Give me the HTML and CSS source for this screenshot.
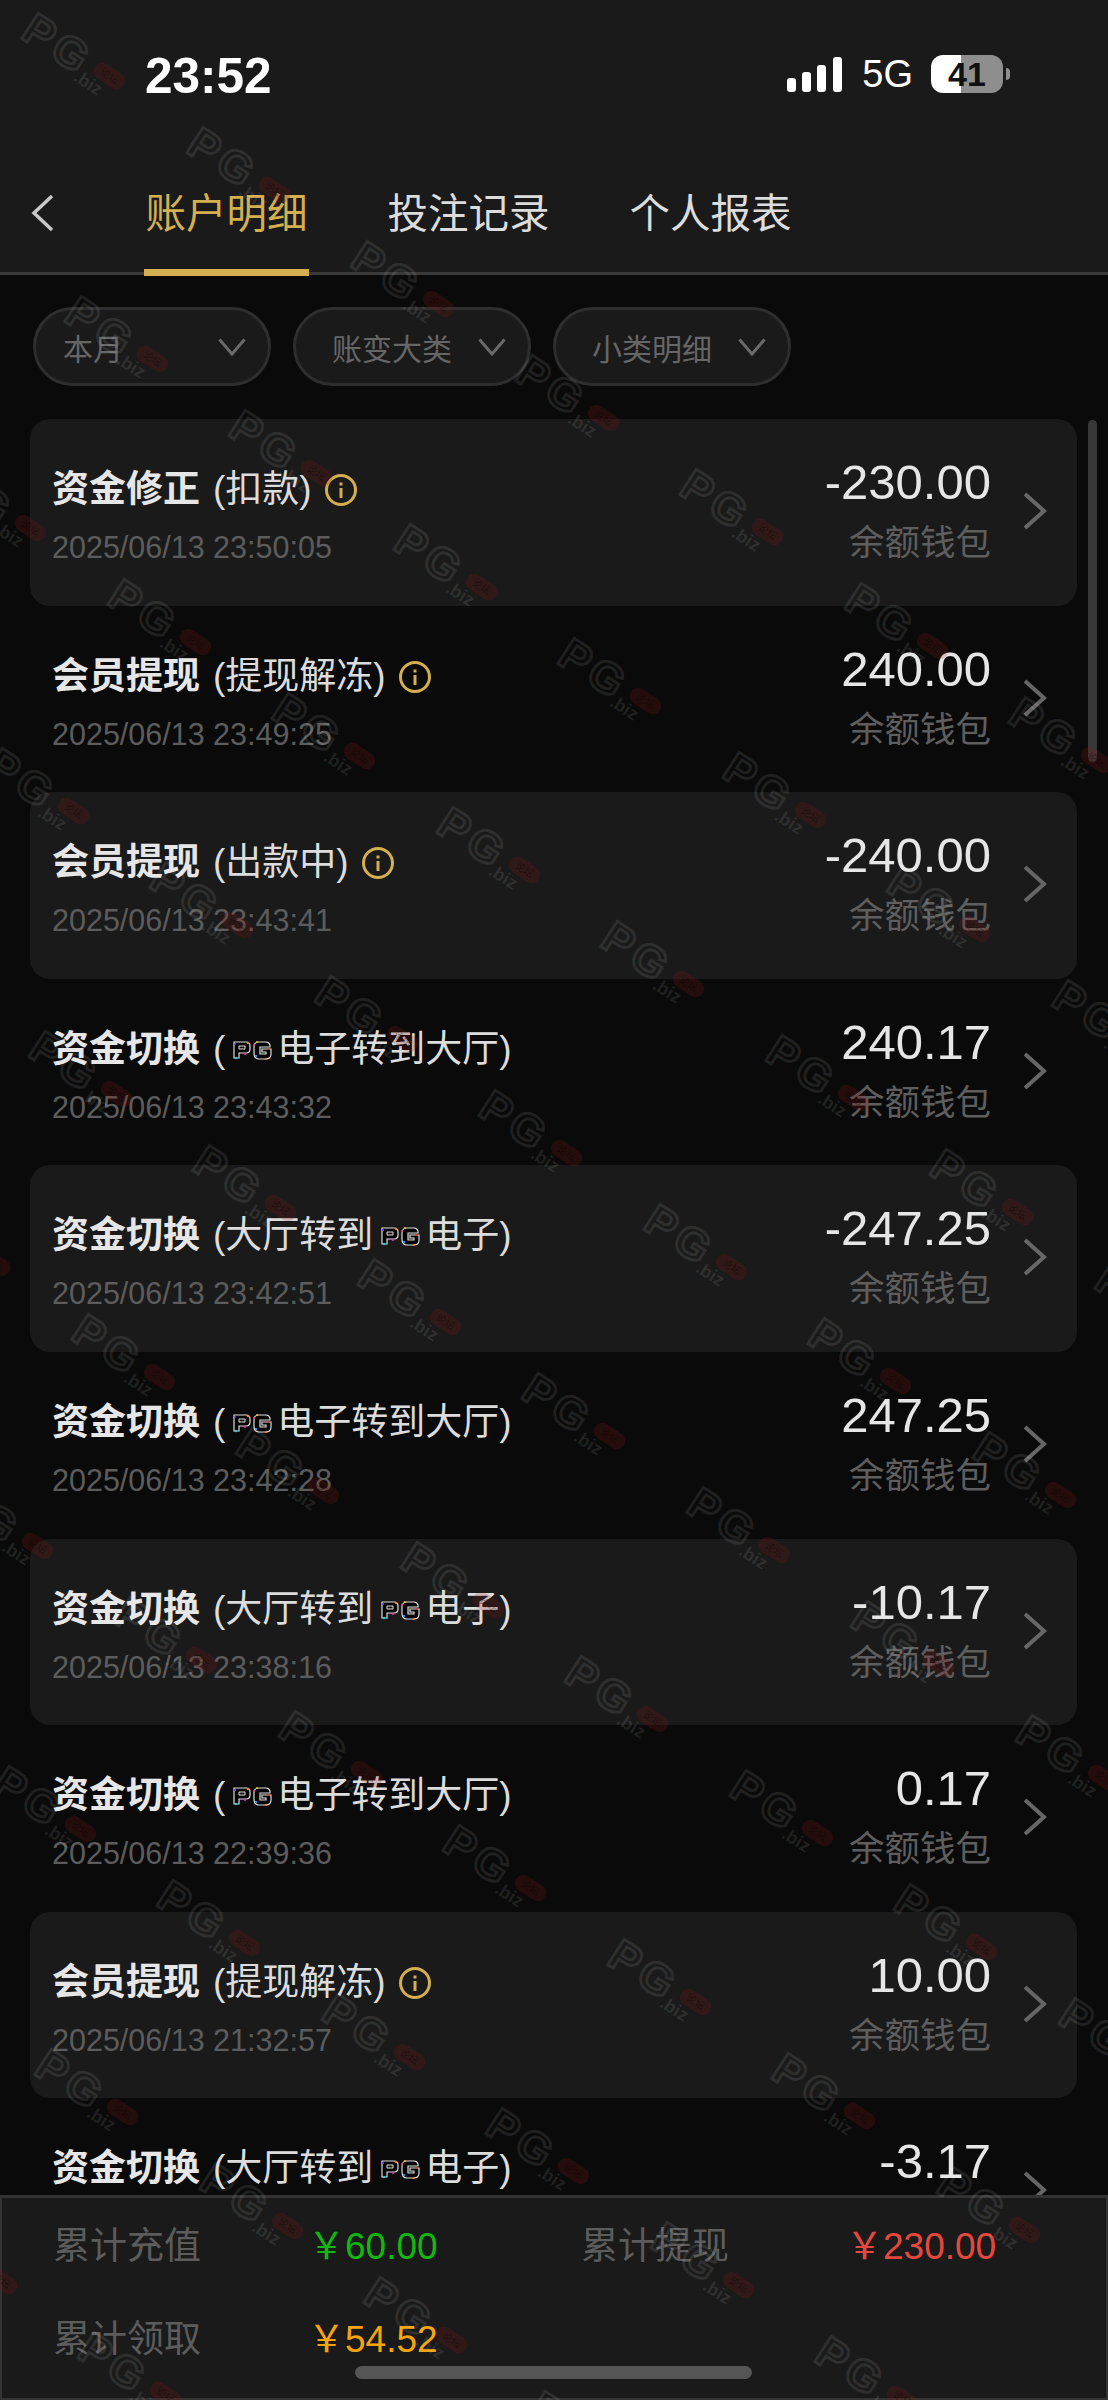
FILE: index.html
```html
<!DOCTYPE html>
<html lang="zh-CN">
<head>
    <meta charset="UTF-8">
    <meta name="viewport" content="width=device-width, initial-scale=1.0">
    <title>账户明细</title>
    <link rel="stylesheet" href="styles.css">
</head>
<body>
    <svg class="defs" width="0" height="0">
        <symbol id="pg" viewBox="0 0 39 20">
            <path d="M1 2H13Q17 2 17 6V9Q17 13 13 13H6V18H1Z" fill="#000" stroke="#ddd" stroke-width="1.2"/>
            <path d="M6 6H12V9H6Z" fill="#111" stroke="#ddd" stroke-width="1"/>
            <path d="M37 5Q36 2 33 2H26Q21 2 21 7V13Q21 19 26 19H33Q38 19 38 14V9H29V12H33V14H27V7H37Z" fill="#000" stroke="#ddd" stroke-width="1.2"/>
            <circle cx="15" cy="3" r="1.3" fill="#f07b2a"/>
            <circle cx="2" cy="4" r="1.1" fill="#8a3cf0"/>
            <circle cx="3" cy="18" r="1.2" fill="#2ac4e8"/>
            <circle cx="12" cy="14" r="1.1" fill="#e830c0"/>
            <circle cx="24" cy="2" r="1.1" fill="#f0b030"/>
            <circle cx="21" cy="5" r="1.1" fill="#f03080"/>
            <circle cx="23" cy="16" r="1.2" fill="#2a90f0"/>
            <circle cx="36" cy="9" r="1.1" fill="#e83020"/>
            <circle cx="33" cy="19" r="1.2" fill="#f07b2a"/>
        </symbol>
        <symbol id="info" viewBox="0 0 32 32">
            <circle cx="16" cy="16" r="14.5" fill="none" stroke="#d4af50" stroke-width="3"/>
            <rect x="14.5" y="14" width="3" height="10" fill="#d4af50"/>
            <rect x="14.5" y="8.5" width="3" height="3" fill="#d4af50"/>
        </symbol>
        <symbol id="next" viewBox="0 0 24 38">
            <path d="M2 2L21 19L2 36" fill="none" stroke="#666" stroke-width="4"/>
        </symbol>
        <symbol id="down" viewBox="0 0 28 18">
            <path d="M1.5 1.5L14 16L26.500 1.500" fill="none" stroke="#6a6a6a" stroke-width="3"/>
        </symbol>
    </svg>

    <div class="app">
        <div class="top">
            <div class="status">
                <div class="time">23:52</div>
                <div class="status-right">
                    <svg class="signal" width="55" height="35" viewBox="0 0 55 35">
                        <rect x="0" y="21" width="9" height="14" rx="3" fill="#fff"/>
                        <rect x="15" y="15" width="9" height="20" rx="3" fill="#fff"/>
                        <rect x="30" y="8" width="9" height="27" rx="3" fill="#fff"/>
                        <rect x="46" y="0" width="9" height="35" rx="3" fill="#fff"/>
                    </svg>
                    <span class="net">5G</span>
                    <div class="battery">41</div>
                    <div class="battery-cap"></div>
                </div>
            </div>
            <div class="tabs">
                <svg class="back" width="24" height="38" viewBox="0 0 24 38">
                    <path d="M21 2L3 19L21 36" fill="none" stroke="#c8c8c8" stroke-width="3.500"/>
                </svg>
                <div class="tab active">账户明细</div>
                <div class="tab">投注记录</div>
                <div class="tab">个人报表</div>
            </div>
        </div>

        <div class="filters">
            <div class="pill"><span>本月</span><svg class="pill-arrow"><use href="#down"/></svg></div>
            <div class="pill"><span>账变大类</span><svg class="pill-arrow"><use href="#down"/></svg></div>
            <div class="pill"><span>小类明细</span><svg class="pill-arrow"><use href="#down"/></svg></div>
        </div>

        <div class="list">
            <div class="scrollbar"></div>

            <div class="row shade">
                <div class="row-left">
                    <div class="title"><b>资金修正</b><span class="sub">(扣款)</span><svg class="info"><use href="#info"/></svg></div>
                    <div class="date">2025/06/13 23:50:05</div>
                </div>
                <div class="row-right"><div class="amount">-230.00</div><div class="wallet">余额钱包</div></div>
                <svg class="next"><use href="#next"/></svg>
            </div>

            <div class="row">
                <div class="row-left">
                    <div class="title"><b>会员提现</b><span class="sub">(提现解冻)</span><svg class="info"><use href="#info"/></svg></div>
                    <div class="date">2025/06/13 23:49:25</div>
                </div>
                <div class="row-right"><div class="amount">240.00</div><div class="wallet">余额钱包</div></div>
                <svg class="next"><use href="#next"/></svg>
            </div>

            <div class="row shade">
                <div class="row-left">
                    <div class="title"><b>会员提现</b><span class="sub">(出款中)</span><svg class="info"><use href="#info"/></svg></div>
                    <div class="date">2025/06/13 23:43:41</div>
                </div>
                <div class="row-right"><div class="amount">-240.00</div><div class="wallet">余额钱包</div></div>
                <svg class="next"><use href="#next"/></svg>
            </div>

            <div class="row">
                <div class="row-left">
                    <div class="title"><b>资金切换</b><span class="sub">(</span><svg class="pg"><use href="#pg"/></svg>电子转到大厅)</div>
                    <div class="date">2025/06/13 23:43:32</div>
                </div>
                <div class="row-right"><div class="amount">240.17</div><div class="wallet">余额钱包</div></div>
                <svg class="next"><use href="#next"/></svg>
            </div>

            <div class="row shade">
                <div class="row-left">
                    <div class="title"><b>资金切换</b><span class="sub">(大厅转到</span><svg class="pg"><use href="#pg"/></svg>电子)</div>
                    <div class="date">2025/06/13 23:42:51</div>
                </div>
                <div class="row-right"><div class="amount">-247.25</div><div class="wallet">余额钱包</div></div>
                <svg class="next"><use href="#next"/></svg>
            </div>

            <div class="row">
                <div class="row-left">
                    <div class="title"><b>资金切换</b><span class="sub">(</span><svg class="pg"><use href="#pg"/></svg>电子转到大厅)</div>
                    <div class="date">2025/06/13 23:42:28</div>
                </div>
                <div class="row-right"><div class="amount">247.25</div><div class="wallet">余额钱包</div></div>
                <svg class="next"><use href="#next"/></svg>
            </div>

            <div class="row shade">
                <div class="row-left">
                    <div class="title"><b>资金切换</b><span class="sub">(大厅转到</span><svg class="pg"><use href="#pg"/></svg>电子)</div>
                    <div class="date">2025/06/13 23:38:16</div>
                </div>
                <div class="row-right"><div class="amount">-10.17</div><div class="wallet">余额钱包</div></div>
                <svg class="next"><use href="#next"/></svg>
            </div>

            <div class="row">
                <div class="row-left">
                    <div class="title"><b>资金切换</b><span class="sub">(</span><svg class="pg"><use href="#pg"/></svg>电子转到大厅)</div>
                    <div class="date">2025/06/13 22:39:36</div>
                </div>
                <div class="row-right"><div class="amount">0.17</div><div class="wallet">余额钱包</div></div>
                <svg class="next"><use href="#next"/></svg>
            </div>

            <div class="row shade">
                <div class="row-left">
                    <div class="title"><b>会员提现</b><span class="sub">(提现解冻)</span><svg class="info"><use href="#info"/></svg></div>
                    <div class="date">2025/06/13 21:32:57</div>
                </div>
                <div class="row-right"><div class="amount">10.00</div><div class="wallet">余额钱包</div></div>
                <svg class="next"><use href="#next"/></svg>
            </div>

            <div class="row">
                <div class="row-left">
                    <div class="title"><b>资金切换</b><span class="sub">(大厅转到</span><svg class="pg"><use href="#pg"/></svg>电子)</div>
                </div>
                <div class="row-right"><div class="amount">-3.17</div></div>
                <svg class="next"><use href="#next"/></svg>
            </div>
        </div>

        <div class="totals">
            <div class="total-label">累计充值</div>
            <div class="total-value green">￥60.00</div>
            <div class="total-label">累计提现</div>
            <div class="total-value red">￥230.00</div>
            <div class="total-label">累计领取</div>
            <div class="total-value orange">￥54.52</div>
        </div>
        <div class="home-bar"></div>
    </div>

    <div class="marks" id="marks"></div>
    <script src="script.js"></script>
</body>
</html>
```

FILE: styles.css
```css
* {
    box-sizing: border-box;
}
body {
    font-family: "Liberation Sans", "Noto Sans CJK SC", sans-serif;
    background-color: #0a0a0a;
    margin: 0;
    padding: 0;
    width: 1108px;
    height: 2400px;
    overflow: hidden;
    position: relative;
}
.defs {
    display: block;
    height: 0;
}
.app {
    height: 2400px;
    display: flex;
    flex-direction: column;
    position: relative;
}

/* top bar */
.top {
    background-color: #1a1a1a;
    height: 275px;
    border-bottom: 3px solid #3a3a3a;
    flex-shrink: 0;
}
.status {
    height: 150px;
    padding: 50px 98px 0 145px;
    display: flex;
    justify-content: space-between;
    align-items: flex-start;
}
.time {
    color: #fff;
    font-size: 49.5px;
    font-weight: bold;
    line-height: 52px;
}
.status-right {
    display: flex;
    align-items: center;
    padding-top: 5px;
}
.signal {
    display: block;
    margin-right: 20px;
}
.net {
    color: #fff;
    font-size: 38px;
    line-height: 38px;
    margin-right: 18px;
}
.battery {
    width: 72px;
    height: 38px;
    border-radius: 12px;
    background: linear-gradient(90deg, #fff 42%, #8e8e8e 42%);
    color: #111;
    font-size: 34px;
    font-weight: bold;
    line-height: 38px;
    text-align: center;
}
.battery-cap {
    width: 4px;
    height: 12px;
    margin-left: 3px;
    border-radius: 0 4px 4px 0;
    background-color: #8e8e8e;
}
.tabs {
    height: 122px;
    padding-left: 144px;
    display: flex;
    gap: 77px;
    position: relative;
}
.back {
    position: absolute;
    left: 31px;
    top: 44px;
}
.tab {
    color: #dcdcdc;
    font-size: 40.5px;
    line-height: 60px;
    padding-top: 34px;
    height: 126px;
    width: 165px;
    display: flex;
    justify-content: center;
    white-space: nowrap;
}
.tab.active {
    color: #d4af50;
    border-bottom: 7px solid #d4af50;
}

/* filters */
.filters {
    display: flex;
    gap: 22px;
    padding: 32px 0 33px 33px;
    flex-shrink: 0;
}
.pill {
    width: 238px;
    height: 79px;
    border: 3px solid #2e2e2e;
    border-radius: 40px;
    background-color: #1a1a1a;
    display: flex;
    align-items: center;
    justify-content: space-between;
    padding: 0 22px 0 36px;
    color: #666;
    font-size: 30px;
}
.pill:first-child {
    padding-left: 27px;
}
.pill-arrow {
    width: 28px;
    height: 18px;
}

/* list */
.list {
    flex: 1;
    min-height: 0;
    overflow: hidden;
    padding: 0 31px 0 30px;
    position: relative;
}
.scrollbar {
    position: absolute;
    left: 1088px;
    top: 1px;
    width: 9px;
    height: 342px;
    border-radius: 5px;
    background-color: #383838;
}
.row {
    height: 186.6px;
    flex-shrink: 0;
    border-radius: 20px;
    padding: 0 30px 0 22px;
    display: flex;
    align-items: flex-start;
}
.row.shade {
    background-color: #1a1a1a;
}
.row-left {
    flex: 1;
    padding-top: 46px;
}
.title {
    color: #dcdcdc;
    font-size: 37px;
    line-height: 50px;
    height: 50px;
    display: flex;
    align-items: center;
    white-space: pre;
}
.title b {
    font-weight: bold;
    color: #e6e6e6;
}
.sub {
    margin-left: 13px;
}
.info {
    width: 32px;
    height: 32px;
    margin-left: 13px;
}
.pg {
    width: 39px;
    height: 20px;
    margin: 0 5px 0 8px;
}
.date {
    color: #5c5c5c;
    font-size: 30.5px;
    line-height: 40px;
    margin-top: 12px;
}
.row-right {
    padding-top: 35px;
    text-align: right;
}
.amount {
    color: #e6e6e6;
    font-size: 49px;
    line-height: 56px;
}
.wallet {
    color: #5e5e5e;
    font-size: 35.5px;
    line-height: 40px;
    margin-top: 13px;
}
.next {
    width: 24px;
    height: 38px;
    margin: 73px 0 0 32px;
}

/* totals */
.totals {
    height: 205px;
    flex-shrink: 0;
    background-color: #1a1a1a;
    border: 2px solid #333;
    border-top-width: 3px;
    padding: 2px 0 0 51px;
    display: grid;
    grid-template-columns: 255px 273px 265px auto;
    grid-auto-rows: 93px;
    align-items: center;
}
.total-label {
    color: #5c5c5c;
    font-size: 37px;
    line-height: 46px;
}
.total-value {
    font-size: 37px;
    line-height: 46px;
}
.green {
    color: #10b810;
}
.red {
    color: #e5483c;
}
.orange {
    color: #f5a40c;
}
.home-bar {
    position: absolute;
    left: 355px;
    top: 2366px;
    width: 397px;
    height: 13px;
    border-radius: 7px;
    background-color: #555;
}

/* watermark layer */
.marks {
    position: absolute;
    left: 0;
    top: 0;
    width: 1108px;
    height: 2400px;
    overflow: hidden;
    pointer-events: none;
}
.mark {
    position: absolute;
    width: 116px;
    height: 50px;
    margin: -25px 0 0 -58px;
    transform: rotate(33deg);
    display: flex;
    align-items: center;
}
.mark-pg {
    color: transparent;
    font-size: 44px;
    font-weight: bold;
    letter-spacing: 5px;
    line-height: 44px;
    -webkit-text-stroke: 3px rgba(255, 255, 255, 0.09);
}
.mark-pill {
    position: absolute;
    left: 80px;
    top: 15px;
    width: 34px;
    height: 17px;
    border-radius: 9px;
    background-color: rgba(150, 25, 25, 0.2);
    color: rgba(0, 0, 0, 0.4);
    font-size: 10px;
    line-height: 17px;
    text-align: center;
}
.mark-biz {
    position: absolute;
    left: 68px;
    top: 31px;
    color: rgba(255, 255, 255, 0.1);
    font-size: 18px;
    font-weight: bold;
    line-height: 20px;
}
```

FILE: script.js
```js
// watermark repeats on a slanted grid, from the top left diagonal downwards
var marks = document.getElementById("marks");

for (var i = -8; i < 8; i++) {
    for (var j = 0; j < 10; j++) {
        var x = 76 + i * 164.5 + j * 42.8;
        var y = 56 + i * 114 + j * 283;
        if (x < -40 || x > 1150 || y < 0 || y > 2440) {
            continue;
        }
        var mark = document.createElement("div");
        mark.className = "mark";
        mark.style.left = x + "px";
        mark.style.top = y + "px";
        mark.innerHTML = '<span class="mark-pg">PG</span><span class="mark-pill">论坛</span><span class="mark-biz">.biz</span>';
        marks.appendChild(mark);
    }
}
```
